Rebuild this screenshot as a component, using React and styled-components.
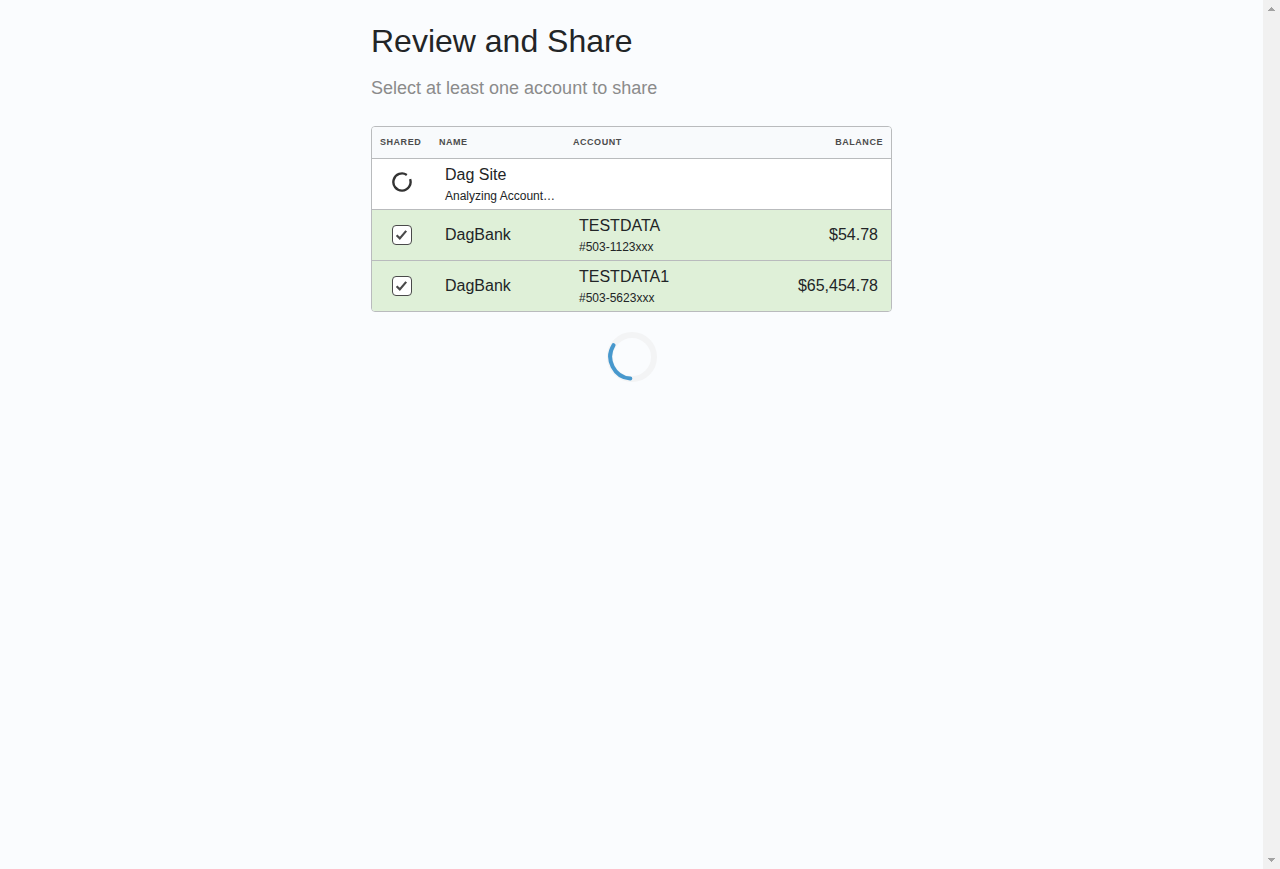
import React, { useState } from "react";
import styled, { createGlobalStyle } from "styled-components";

const GlobalStyle = createGlobalStyle`
  *, *::before, *::after { box-sizing: border-box; }
  body {
    margin: 0;
    background: #fafcfe;
    color: #222527;
    font-family: Arial, "Liberation Sans", sans-serif;
    font-size: 16px;
  }
`;

const Page = styled.div`
  display: flex;
  min-height: 100vh;
`;

const Main = styled.main`
  flex: 1;
  display: flex;
  flex-direction: column;
  align-items: center;
  padding: 20px 16px;
`;

const Content = styled.section`
  width: 100%;
  max-width: 521px;
`;

const Title = styled.h1`
  margin: 0;
  font-size: 32px;
  line-height: 42px;
  font-weight: 400;
`;

const Subtitle = styled.p`
  margin: 14px 0 26px;
  font-size: 18px;
  line-height: 24px;
  color: #8b8b8b;
`;

const TableFrame = styled.div`
  border: 1px solid #b9bbbd;
  border-radius: 4px;
  overflow: hidden;
`;

const Table = styled.table`
  width: 100%;
  table-layout: fixed;
  border-collapse: separate;
  border-spacing: 0;
`;

const HeadCell = styled.th`
  width: ${(p) => p.$width || "auto"};
  height: 31px;
  padding: 0 8px 2px;
  background: #f8fafc;
  color: #4c4c4c;
  font-size: 9px;
  line-height: 12px;
  font-weight: 700;
  letter-spacing: 0.06em;
  text-align: ${(p) => p.$align || "left"};
  text-transform: uppercase;
  white-space: nowrap;
`;

const Row = styled.tr`
  background: ${(p) => (p.$shared ? "#dff0d8" : "#ffffff")};
`;

const Cell = styled.td`
  height: 51px;
  padding: ${(p) => (p.$center ? "0" : "0 13px 0 14px")};
  border-top: 1px solid #b9bbbd;
  line-height: 20px;
  text-align: ${(p) => p.$align || "left"};
  vertical-align: middle;
  white-space: nowrap;
`;

const Toggle = styled.div`
  display: flex;
  justify-content: center;
`;

const Detail = styled.div`
  padding-top: 4px;
  font-size: 12px;
  line-height: 14px;
`;

const CheckLabel = styled.label`
  display: grid;
  width: 20px;
  height: 20px;
  cursor: pointer;

  > * { grid-area: 1 / 1; }
`;

const Checkbox = styled.input`
  appearance: none;
  width: 20px;
  height: 20px;
  margin: 0;
  border: 1px solid #4a4a4a;
  border-radius: 4px;
  background: #ffffff;
  cursor: pointer;

  &:not(:checked) + svg { visibility: hidden; }
`;

const CheckMark = styled.svg`
  width: 20px;
  height: 20px;
  pointer-events: none;
`;

const SpinnerSlot = styled(Toggle)`
  padding-bottom: 4px;
`;

const SmallSpinner = styled.svg`
  display: block;
  width: 20px;
  height: 20px;
`;

const Loader = styled.div`
  display: flex;
  justify-content: center;
  padding-top: 20px;
`;

const LoaderIcon = styled.svg`
  width: 50px;
  height: 50px;
`;

const ScrollTrack = styled.div`
  display: flex;
  flex-direction: column;
  justify-content: space-between;
  width: 17px;
  background: #f1f1f1;
`;

const ScrollArrow = styled.button`
  display: block;
  width: 17px;
  height: 17px;
  padding: 0;
  border: 0;
  background: transparent;

  svg { display: block; }
`;

const initialAccounts = [
  { id: 1, bank: "DagBank", name: "TESTDATA", number: "#503-1123xxx", balance: "$54.78", shared: true },
  { id: 2, bank: "DagBank", name: "TESTDATA1", number: "#503-5623xxx", balance: "$65,454.78", shared: true },
];

function AccountRow({ account, onToggle }) {
  return (
    <Row $shared={account.shared}>
      <Cell $center>
        <Toggle>
          <CheckLabel>
            <Checkbox
              type="checkbox"
              aria-label={`Share ${account.name}`}
              checked={account.shared}
              onChange={() => onToggle(account.id)}
            />
            <CheckMark viewBox="0 0 20 20" aria-hidden="true">
              <path d="M4.6 10.2 L7.8 13.4 L14.2 5.9" fill="none" stroke="#4a4a4a" strokeWidth="2.2" />
            </CheckMark>
          </CheckLabel>
        </Toggle>
      </Cell>
      <Cell>{account.bank}</Cell>
      <Cell>
        {account.name}
        <Detail>{account.number}</Detail>
      </Cell>
      <Cell $align="right">{account.balance}</Cell>
    </Row>
  );
}

export default function App() {
  const [accounts, setAccounts] = useState(initialAccounts);
  const toggle = (id) =>
    setAccounts((list) => list.map((a) => (a.id === id ? { ...a, shared: !a.shared } : a)));

  return (
    <Page>
      <GlobalStyle />
      <Main>
        <Content>
          <Title>Review and Share</Title>
          <Subtitle>Select at least one account to share</Subtitle>
          <TableFrame>
            <Table>
              <thead>
                <tr>
                  <HeadCell $width="59px">Shared</HeadCell>
                  <HeadCell $width="134px">Name</HeadCell>
                  <HeadCell>Account</HeadCell>
                  <HeadCell $align="right">Balance</HeadCell>
                </tr>
              </thead>
              <tbody>
                <Row>
                  <Cell $center>
                    <SpinnerSlot>
                      <SmallSpinner viewBox="0 0 20 20" aria-hidden="true">
                        <path
                          d="M14.8 2.9 A8.6 8.6 0 1 0 18.1 7.2"
                          fill="none"
                          stroke="#333333"
                          strokeWidth="2.4"
                        />
                      </SmallSpinner>
                    </SpinnerSlot>
                  </Cell>
                  <Cell>
                    Dag Site
                    <Detail>Analyzing Account…</Detail>
                  </Cell>
                  <Cell />
                  <Cell />
                </Row>
                {accounts.map((a) => (
                  <AccountRow key={a.id} account={a} onToggle={toggle} />
                ))}
              </tbody>
            </Table>
          </TableFrame>
          <Loader role="status" aria-label="Loading">
            <LoaderIcon viewBox="0 0 50 50" aria-hidden="true">
              <circle cx="25" cy="25" r="22" fill="none" stroke="#f3f4f5" strokeWidth="6" />
              <path
                d="M6.5 13.2 A22 22 0 0 0 23.3 46.6"
                fill="none"
                stroke="#4798cd"
                strokeWidth="4"
                strokeLinecap="round"
              />
            </LoaderIcon>
          </Loader>
        </Content>
      </Main>
      <ScrollTrack>
        <ScrollArrow type="button" aria-label="Scroll up">
          <svg width="17" height="17" viewBox="0 0 17 17" shapeRendering="crispEdges">
            <path d="M8 7h1v1h1v1h1v1h1v1H5v-1h1V9h1V8h1z" fill="#a3a3a3" />
          </svg>
        </ScrollArrow>
        <ScrollArrow type="button" aria-label="Scroll down">
          <svg width="17" height="17" viewBox="0 0 17 17" shapeRendering="crispEdges">
            <path d="M5 6h7v1h-1v1h-1v1H9v1H8V9H7V8H6V7H5z" fill="#a3a3a3" />
          </svg>
        </ScrollArrow>
      </ScrollTrack>
    </Page>
  );
}
